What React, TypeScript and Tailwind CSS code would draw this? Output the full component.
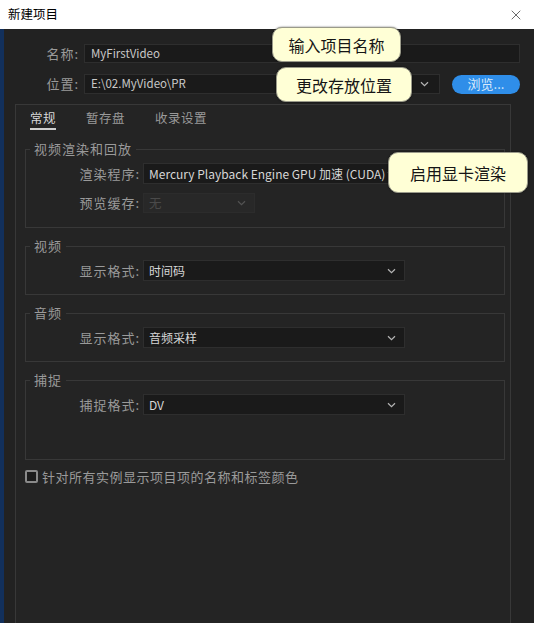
import { X } from "lucide-react";

const Chevron = ({ dim }: { dim?: boolean }) => (
  <svg width="9" height="6" viewBox="0 0 9 6" className={dim ? "opacity-30" : ""}>
    <path d="M1 1.2 L4.5 4.6 L8 1.2" fill="none" stroke="#b5b5b5" strokeWidth="1.2" />
  </svg>
);

const Select = ({ value, width = "w-[262px]" }: { value: string; width?: string }) => (
  <div className={`${width} h-[21px] flex items-center justify-between bg-[#1a1a1a] border border-[#2e2e2e] pl-[5px] pr-[8px]`}>
    <span className="text-[12px] text-[#d6d6d6] whitespace-nowrap">{value}</span>
    <Chevron />
  </div>
);

const Row = ({ label, children }: { label: string; children: React.ReactNode }) => (
  <div className="flex items-center">
    <span className="w-[117px] text-right pr-[3px] text-[13px] tracking-[1px] text-[#9a9a9a]">{label}</span>
    {children}
  </div>
);

const Group = ({ title, pb, children }: { title: string; pb: string; children: React.ReactNode }) => (
  <fieldset className={`border border-[#383838] ml-[9px] mr-[5px] pt-[6px] ${pb} flex flex-col gap-[9px]`}>
    <legend className="ml-[4px] px-[4px] text-[13px] leading-[16px] tracking-[1px] text-[#9a9a9a]">{title}</legend>
    {children}
  </fieldset>
);

const Callout = ({ text, className }: { text: string; className: string }) => (
  <div
    className={`absolute flex items-center justify-center bg-[#ffffd6] border border-[#9a9a8a] rounded-[10px] shadow-[0_0_2px_rgba(0,0,0,0.6)] text-[16px] text-[#151515] ${className}`}
  >
    {text}
  </div>
);

export default function App() {
  return (
    <div className="relative w-[534px] h-[623px] overflow-hidden flex flex-col bg-[#222222] font-['Noto_Sans_CJK_SC','Noto_Sans',sans-serif]">
      {/* title bar */}
      <div className="h-[29px] bg-white flex items-center justify-between pl-[8px] pr-[10px] shrink-0">
        <span className="text-[12.5px] text-black">新建项目</span>
        <X className="w-[16px] h-[16px] text-[#333]" strokeWidth={1.1} />
      </div>

      <div className="flex flex-1 min-h-0">
        <div className="w-[4px] bg-[#12305c]" />
        <div className="flex-1 flex flex-col pt-[15px]">
          {/* name */}
          <div className="flex items-center h-[19px]">
            <span className="w-[80px] text-right pr-[5px] text-[13px] tracking-[1px] text-[#9a9a9a]">名称:</span>
            <div className="flex-1 mr-[14px] h-[19px] flex items-center bg-[#1a1a1a] border border-[#2e2e2e] pl-[6px]">
              <span className="text-[11.5px] text-[#c8c8c8]">MyFirstVideo</span>
            </div>
          </div>
          {/* location */}
          <div className="flex items-center h-[20px] mt-[11px]">
            <span className="w-[80px] text-right pr-[5px] text-[13px] tracking-[1px] text-[#9a9a9a]">位置:</span>
            <div className="w-[356px] h-[20px] flex items-center justify-between bg-[#1a1a1a] border border-[#2e2e2e] pl-[6px] pr-[10px]">
              <span className="text-[11.5px] text-[#c8c8c8]">E:\02.MyVideo\PR</span>
              <Chevron />
            </div>
            <div className="ml-[12px] w-[68px] h-[19px] rounded-full bg-[#2f8ee9] flex items-center justify-center text-[13px] text-[#d8e9fb]">
              浏览...
            </div>
          </div>

          {/* settings panel */}
          <div className="flex-1 mt-[10px] ml-[11px] mr-[23px] border border-b-0 border-[#383838] bg-[#242424] flex flex-col">
            <div className="flex items-end h-[25px] pl-[14px] gap-[30px] text-[12.5px] tracking-[0.5px]">
              <span className="text-[#d8d8d8] border-b-2 border-[#cfcfcf] pb-[1px] leading-[18px]">常规</span>
              <span className="text-[#9a9a9a] pb-[3px] leading-[18px]">暂存盘</span>
              <span className="text-[#9a9a9a] pb-[3px] leading-[18px]">收录设置</span>
            </div>

            <div className="mt-[11px] flex flex-col gap-[10px]">
              <Group title="视频渲染和回放" pb="pb-[14px]">
                <Row label="渲染程序:">
                  <Select value="Mercury Playback Engine GPU 加速 (CUDA)" />
                </Row>
                <Row label="预览缓存:">
                  <div className="w-[112px] h-[20px] flex items-center justify-between bg-[#282828] border border-[#2c2c2c] pl-[5px] pr-[8px]">
                    <span className="text-[12.5px] text-[#4a4a4a]">无</span>
                    <Chevron dim />
                  </div>
                </Row>
              </Group>

              <Group title="视频" pb="pb-[13px]">
                <Row label="显示格式:">
                  <Select value="时间码" />
                </Row>
              </Group>

              <Group title="音频" pb="pb-[13px]">
                <Row label="显示格式:">
                  <Select value="音频采样" />
                </Row>
              </Group>

              <Group title="捕捉" pb="pb-[44px]">
                <Row label="捕捉格式:">
                  <Select value="DV" />
                </Row>
              </Group>
            </div>

            <div className="flex items-center mt-[7px] ml-[9px] gap-[4px]">
              <div className="w-[13px] h-[13px] border-2 border-[#8a8a8a] rounded-[2px] bg-[#1c1c1c]" />
              <span className="text-[13px] tracking-[0.5px] text-[#9a9a9a]">针对所有实例显示项目项的名称和标签颜色</span>
            </div>
          </div>
        </div>
      </div>

      <Callout text="输入项目名称" className="left-[272px] top-[27px] w-[129px] h-[35px]" />
      <Callout text="更改存放位置" className="left-[276px] top-[67px] w-[136px] h-[35px]" />
      <Callout text="启用显卡渲染" className="left-[388px] top-[152px] w-[140px] h-[41px]" />
    </div>
  );
}
